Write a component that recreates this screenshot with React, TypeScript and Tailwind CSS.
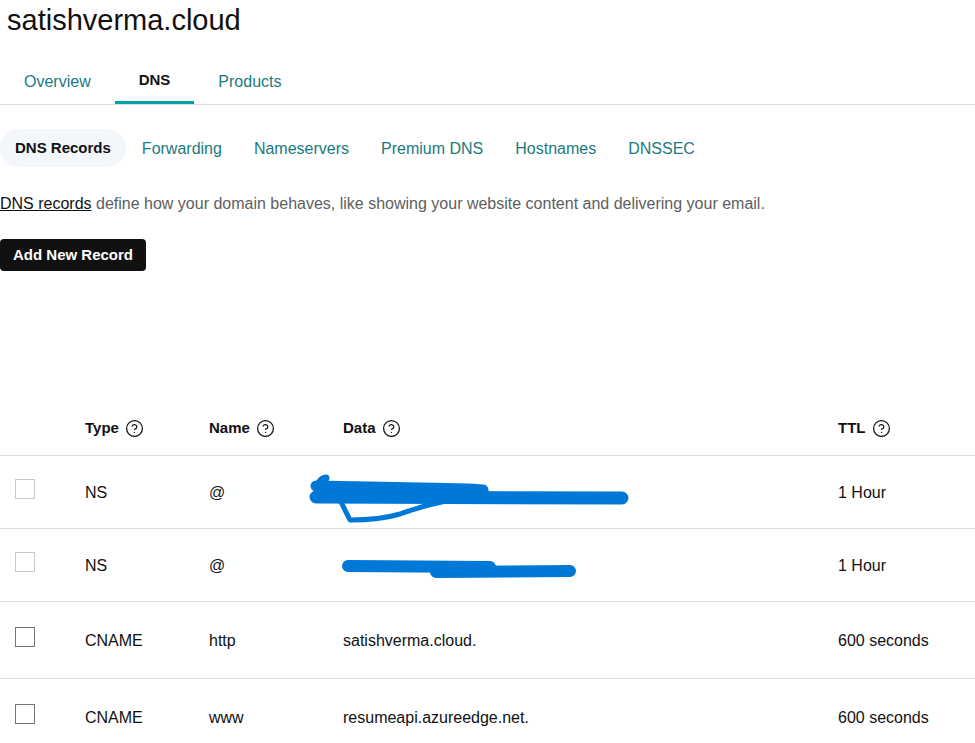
import { CircleHelp } from "lucide-react";

type Row = {
  type: string;
  name: string;
  data?: string;
  ttl: string;
  locked?: boolean;
  scribble?: 1 | 2;
  tall?: boolean;
};

const rows: Row[] = [
  { type: "NS", name: "@", ttl: "1 Hour", locked: true, scribble: 1 },
  { type: "NS", name: "@", ttl: "1 Hour", locked: true, scribble: 2 },
  { type: "CNAME", name: "http", data: "satishverma.cloud.", ttl: "600 seconds", tall: true },
  { type: "CNAME", name: "www", data: "resumeapi.azureedge.net.", ttl: "600 seconds", tall: true },
];

const subTabs = ["Forwarding", "Nameservers", "Premium DNS", "Hostnames", "DNSSEC"];

function Scribble({ kind }: { kind: 1 | 2 }) {
  // redaction marks drawn over the data column
  if (kind === 1) {
    return (
      <svg className="absolute left-[300px] top-0 pointer-events-none" width="340" height="72" viewBox="0 0 340 72">
        <g fill="none" stroke="#0078d7" strokeLinecap="round" strokeLinejoin="round">
          <path d="M16 41 L322 42" strokeWidth="13" />
          <path d="M16 30 Q 60 31 120 32 T 183 34" strokeWidth="11" />
          <path d="M19 27 Q 22 22 26 22" strokeWidth="7" />
          <path d="M40 44 L50 64 Q 80 64 100 58 Q 122 50 146 45" strokeWidth="5" />
        </g>
      </svg>
    );
  }
  return (
    <svg className="absolute left-[300px] top-0 pointer-events-none" width="300" height="72" viewBox="0 0 300 72">
      <g fill="none" stroke="#0078d7" strokeLinecap="round">
        <path d="M48 37 L190 38" strokeWidth="12" />
        <path d="M136 43 L270 42" strokeWidth="12" />
      </g>
    </svg>
  );
}

function HeadCell({ label }: { label: string }) {
  return (
    <div className="flex items-center gap-[6px] font-bold text-[15px] text-[#111]">
      <span>{label}</span>
      <CircleHelp size={19} strokeWidth={1.6} className="text-[#111]" />
    </div>
  );
}

export default function App() {
  return (
    <div className="w-[975px] h-[743px] overflow-hidden bg-white text-[#111]" style={{ fontFamily: '"Liberation Sans", Arial, sans-serif' }}>
      <h1 className="pl-[7px] text-[29px] leading-[40px] text-[#111]">satishverma.cloud</h1>

      {/* Main tabs */}
      <nav className="mt-[17px] flex border-b border-[#d9dde1] text-[16px]">
        <div className="px-6 h-[47px] flex items-center pt-[2px] text-[#1b7a7e]">Overview</div>
        <div className="px-6 h-[47px] flex items-center pt-[2px] font-bold text-[15px] border-b-[3px] border-[#00a4a6] -mb-px">DNS</div>
        <div className="px-6 h-[47px] flex items-center pt-[2px] text-[#1b7a7e]">Products</div>
      </nav>

      {/* Sub tabs */}
      <div className="mt-[24px] flex items-center text-[16px]">
        <div className="h-[38px] px-[15px] flex items-center rounded-full bg-[#f3f6fa] font-bold text-[15px]">DNS Records</div>
        {subTabs.map((t) => (
          <div key={t} className="h-[38px] px-4 flex items-center pt-px text-[#1b7a7e]">
            {t}
          </div>
        ))}
      </div>

      <p className="mt-[27px] text-[16px] leading-[20px] text-[#5e5e5e]">
        <span className="underline text-[#111]">DNS records</span> define how your domain behaves, like showing your website content and delivering your email.
      </p>

      <button className="mt-[25px] h-[32px] px-[13px] rounded-[4px] bg-[#111] text-white font-bold text-[15px]">
        Add New Record
      </button>

      {/* Records table */}
      <div className="mt-[130px]">
        <div className="grid grid-cols-[85px_124px_134px_495px_1fr] h-[55px] items-center border-b border-[#d9dde1]">
          <div />
          <HeadCell label="Type" />
          <HeadCell label="Name" />
          <HeadCell label="Data" />
          <HeadCell label="TTL" />
        </div>
        {rows.map((r, i) => (
          <div
            key={i}
            className={`relative grid grid-cols-[85px_124px_134px_495px_1fr] items-center border-b border-[#d9dde1] text-[16px] ${r.tall ? "h-[77px]" : "h-[73px]"}`}
          >
            <div className="pl-[15px] -mt-[6px]">
              <div className={`w-[20px] h-[20px] border ${r.locked ? "border-[#c9c9c9]" : "border-[#777]"}`} />
            </div>
            <div className="pt-px">{r.type}</div>
            <div className="pt-px">{r.name}</div>
            <div className="pt-px">{r.data ?? ""}</div>
            <div className="pt-px">{r.ttl}</div>
            {r.scribble && <Scribble kind={r.scribble} />}
          </div>
        ))}
      </div>
    </div>
  );
}
